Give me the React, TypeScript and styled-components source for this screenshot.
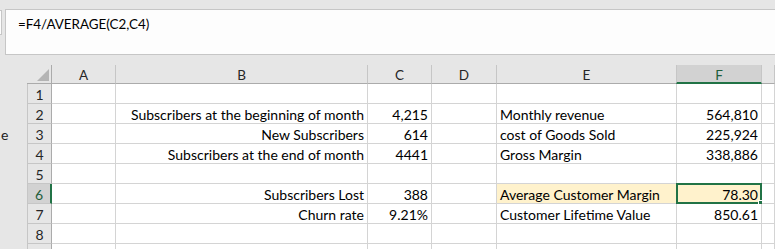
import React from "react";
import styled, { createGlobalStyle } from "styled-components";

const GlobalStyle = createGlobalStyle`
  html, body { margin: 0; padding: 0; background: #e6e6e6; }
  * { box-sizing: border-box; }
`;

const FONT = `"Lato", "Open Sans", sans-serif`;
const GREEN = "#217346";
const GRID = "#d4d4d4";

const Page = styled.div`
  width: 775px;
  height: 249px;
  overflow: hidden;
  background: #e6e6e6;
  font-family: ${FONT};
  color: #000;
`;

const FormulaRow = styled.div`
  display: flex;
  align-items: flex-start;
  padding-top: 9px;
  gap: 3px;
`;

const NameStub = styled.div`
  width: 2px;
  height: 25px;
  margin-top: 1px;
  background: #fdfdfd;
  border: 1px solid #c6c6c6;
  border-left: none;
`;

const FormulaBox = styled.div`
  flex: 1;
  height: 46px;
  background: #fdfdfd;
  border: 1px solid #c6c6c6;
  border-right: none;
  padding: 5px 0 0 12px;
  font-size: 13.4px;
  line-height: 19px;
  color: #000;
`;

const SheetArea = styled.div`
  display: flex;
  margin-top: 10px;
`;

const SidePanel = styled.div`
  width: 27px;
  padding-top: 60px;
  font-size: 14px;
  line-height: 20px;
  color: #222;
  overflow: hidden;
  text-indent: 1px;
`;

const Grid = styled.div`
  flex: 1;
  display: grid;
  grid-template-columns: 25px 64px 252px 64px 65px 180px 85px 1fr;
  grid-auto-rows: 20px;
  grid-template-rows: 19px;
`;

const Corner = styled.div`
  display: flex;
  align-items: flex-end;
  justify-content: flex-end;
  padding: 0 2px 2px 0;
  border-right: 1px solid #ababab;
  border-bottom: 1px solid #ababab;
`;

const ColHeader = styled.div<{ $active?: boolean }>`
  display: flex;
  justify-content: center;
  padding-top: 2px;
  font-size: 13.5px;
  line-height: 16px;
  color: ${(p) => (p.$active ? "#1e5e3b" : "#262626")};
  background: ${(p) => (p.$active ? "#d2d2d2" : "#e6e6e6")};
  border-right: 1px solid #c6c6c6;
  border-left: ${(p) => (p.$active ? "1px solid #c6c6c6" : "none")};
  margin-left: ${(p) => (p.$active ? "-1px" : "0")};
  border-bottom: ${(p) => (p.$active ? `2px solid ${GREEN}` : "1px solid #ababab")};
`;

const RowHeader = styled.div<{ $active?: boolean }>`
  display: flex;
  justify-content: center;
  padding-top: 2px;
  font-size: 14px;
  line-height: 17px;
  color: ${(p) => (p.$active ? "#1e5e3b" : "#262626")};
  background: ${(p) => (p.$active ? "#d2d2d2" : "#e6e6e6")};
  border-left: 1px solid #c6c6c6;
  border-bottom: 1px solid #c6c6c6;
  border-right: ${(p) => (p.$active ? `2px solid ${GREEN}` : "1px solid #ababab")};
`;

const Cell = styled.div<{ $align?: "left" | "right"; $fill?: boolean }>`
  position: relative;
  font-size: 14px;
  line-height: 17px;
  padding: 2px 3px 0;
  white-space: nowrap;
  text-align: ${(p) => p.$align ?? "left"};
  background: ${(p) => (p.$fill ? "#fff2cc" : "#ffffff")};
  border-right: 1px solid ${(p) => (p.$fill ? "#fff2cc" : GRID)};
  border-bottom: 1px solid ${GRID};
`;

const Selection = styled.span`
  position: absolute;
  left: -1px;
  top: -1px;
  right: -1px;
  bottom: -1px;
  border: 2px solid ${GREEN};
  pointer-events: none;
`;

const FillHandle = styled.span`
  position: absolute;
  right: -3px;
  bottom: -3px;
  width: 6px;
  height: 6px;
  background: ${GREEN};
  border: 1px solid #fff;
`;

type Row = {
  b?: string;
  c?: string;
  e?: string;
  f?: string;
  highlight?: boolean;
};

const rows: Row[] = [
  {},
  { b: "Subscribers at the beginning of month", c: "4,215", e: "Monthly revenue", f: "564,810" },
  { b: "New Subscribers", c: "614", e: "cost of Goods Sold", f: "225,924" },
  { b: "Subscribers at the end of month", c: "4441", e: "Gross Margin", f: "338,886" },
  {},
  { b: "Subscribers Lost", c: "388", e: "Average Customer Margin", f: "78.30", highlight: true },
  { b: "Churn rate", c: "9.21%", e: "Customer Lifetime Value", f: "850.61" },
  {},
  {},
];

const columns = ["A", "B", "C", "D", "E", "F", ""];

export default function App() {
  return (
    <Page>
      <GlobalStyle />
      <FormulaRow>
        <NameStub />
        <FormulaBox>=F4/AVERAGE(C2,C4)</FormulaBox>
      </FormulaRow>
      <SheetArea>
        <SidePanel>e</SidePanel>
        <Grid>
          <Corner>
            <svg width="12" height="12" viewBox="0 0 12 12">
              <polygon points="12,0 12,12 0,12" fill="#b4b4b4" />
            </svg>
          </Corner>
          {columns.map((c, i) => (
            <ColHeader key={i} $active={c === "F"}>
              {c}
            </ColHeader>
          ))}
          {rows.map((r, i) => (
            <React.Fragment key={i}>
              <RowHeader $active={r.highlight}>{i < 8 ? i + 1 : ""}</RowHeader>
              <Cell />
              <Cell $align="right">{r.b}</Cell>
              <Cell $align="right">{r.c}</Cell>
              <Cell />
              <Cell $fill={r.highlight}>{r.e}</Cell>
              <Cell $align="right" $fill={r.highlight}>
                {r.f}
                {r.highlight && (
                  <>
                    <Selection />
                    <FillHandle />
                  </>
                )}
              </Cell>
              <Cell />
            </React.Fragment>
          ))}
        </Grid>
      </SheetArea>
    </Page>
  );
}
